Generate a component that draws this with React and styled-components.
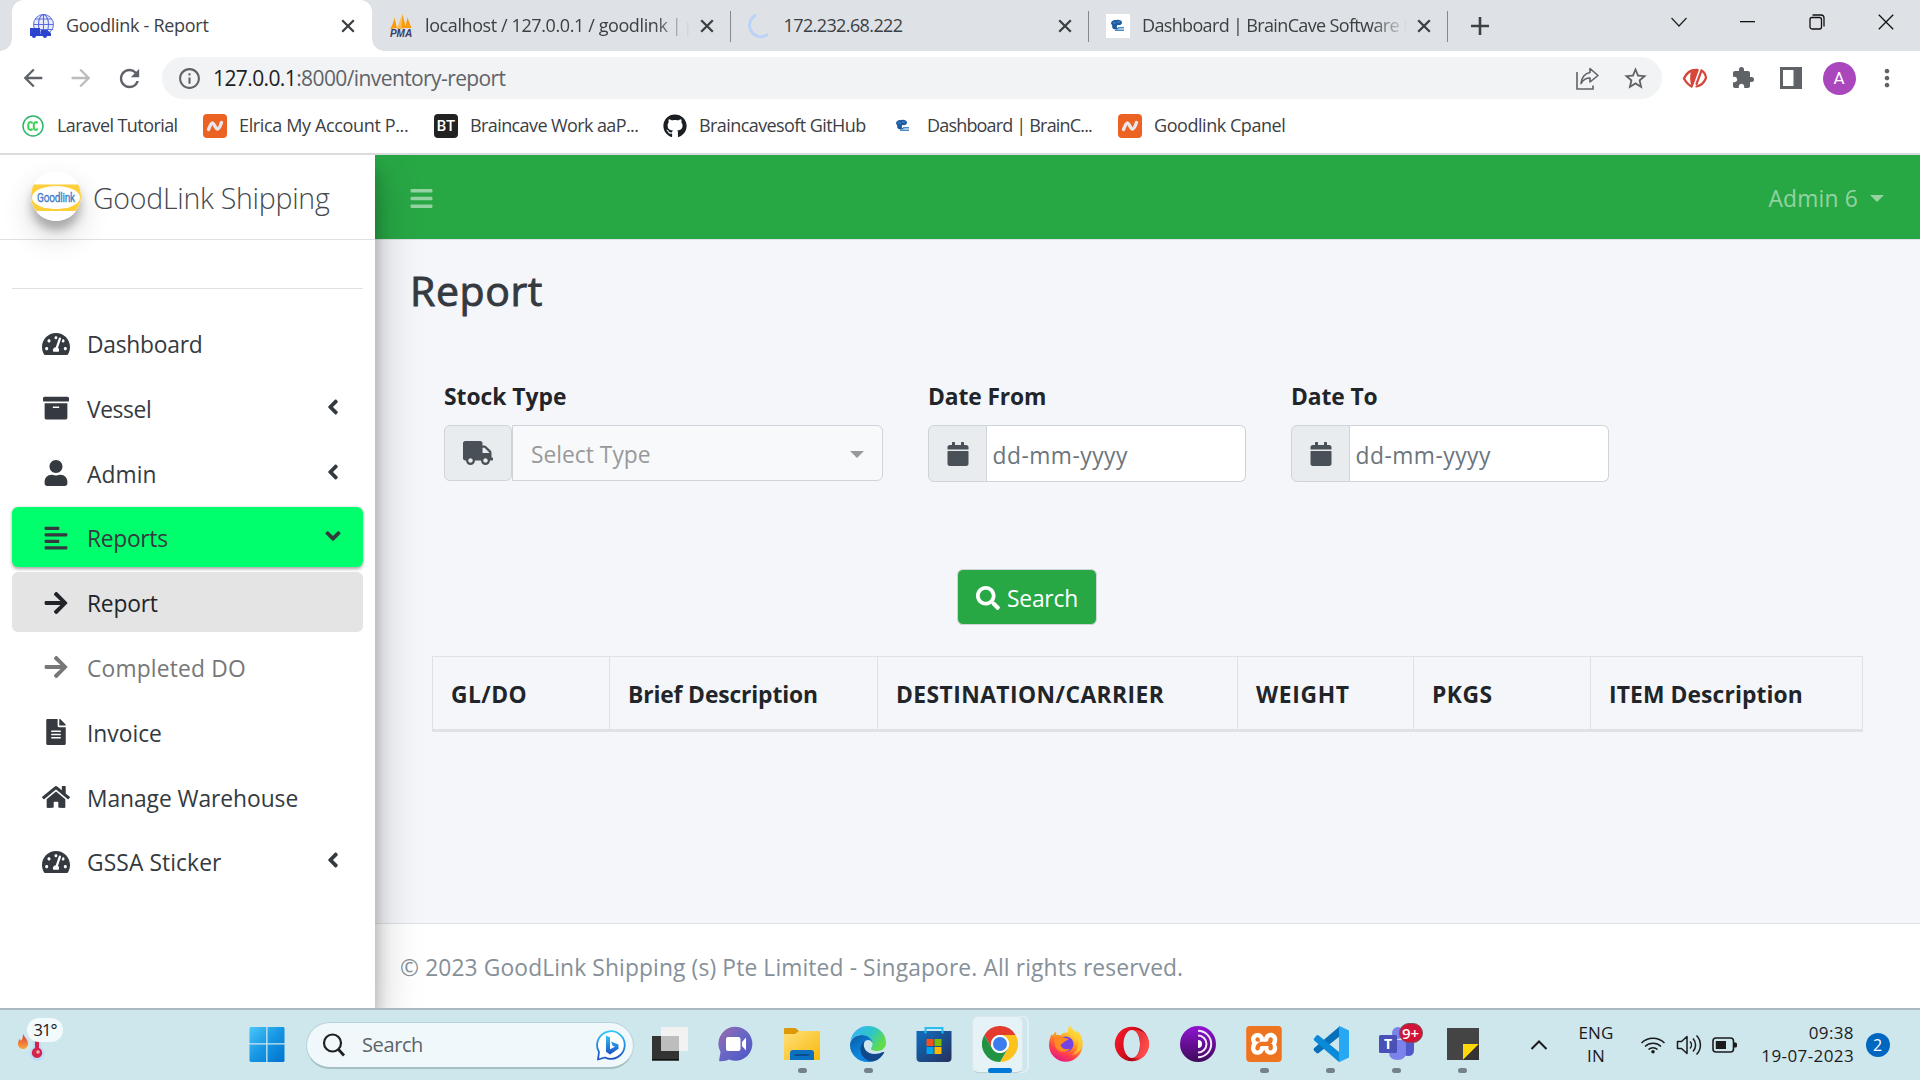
import React from "react";
import styled, { createGlobalStyle, css } from "styled-components";
import {
  FaTachometerAlt,
  FaArchive,
  FaUser,
  FaAlignLeft,
  FaArrowRight,
  FaFileAlt,
  FaHome,
  FaAngleLeft,
  FaAngleDown,
  FaTruck,
  FaCalendar,
  FaSearch,
  FaBars,
  FaGithub,
} from "react-icons/fa";
import {
  MdArrowBack,
  MdArrowForward,
  MdRefresh,
  MdInfoOutline,
  MdStarBorder,
  MdExtension,
  MdMoreVert,
} from "react-icons/md";
import { SiXampp } from "react-icons/si";

const Global = createGlobalStyle`
  *, *::before, *::after { box-sizing: border-box; }
  body { margin: 0; overflow: hidden; font-family: "Open Sans", "Noto Sans", sans-serif; color: #212529; }
  svg { display: block; flex: none; }
`;

const Screen = styled.div`
  width: 1920px;
  height: 1080px;
  display: flex;
  flex-direction: column;
  overflow: hidden;
  background: #fff;
`;

/* ---------- Browser tabs ---------- */

const TabStrip = styled.div`
  height: 51px;
  flex: none;
  display: flex;
  padding-left: 12px;
  background: #dee1e6;
`;

const Tab = styled.div`
  width: ${(p) => (p.$active ? 360 : 358.5)}px;
  flex: none;
  display: flex;
  align-items: center;
  padding: 0 ${(p) => (p.$active ? 11 : 10)}px 0 ${(p) => (p.$active ? 18 : 17)}px;
  position: relative;
  color: #3c4043;
  ${(p) =>
    p.$active
      ? css`
          background: #fff;
          border-radius: 12px 12px 0 0;
          &::before,
          &::after {
            content: "";
            position: absolute;
            bottom: 0;
            width: 12px;
            height: 12px;
          }
          &::before {
            left: -12px;
            background: radial-gradient(circle at 0 0, transparent 11.5px, #fff 12px);
          }
          &::after {
            right: -12px;
            background: radial-gradient(circle at 100% 0, transparent 11.5px, #fff 12px);
          }
        `
      : css`
          border-style: solid;
          border-width: 0 1.5px 0 0;
          border-image: linear-gradient(transparent 12px, #85898d 12px, #85898d 41px, transparent 41px) 1;
        `}
`;

const Favicon = styled.span`
  width: 24px;
  height: 24px;
  flex: none;
  margin-right: 12px;
  display: flex;
  align-items: center;
  justify-content: center;
`;

const TabTitle = styled.span`
  flex: 1;
  min-width: 0;
  margin-top: -1px;
  white-space: nowrap;
  font-size: 18px;
  line-height: 24px;
  letter-spacing: ${(p) => p.$ls || 0}px;
  ${(p) =>
    p.$fade &&
    css`
      mask-image: linear-gradient(90deg, #000 calc(100% - 36px), transparent 100%);
    `}
`;

const TabClose = styled.span`
  width: 26px;
  flex: none;
  display: flex;
  justify-content: center;
  margin-left: 4px;
`;

const NewTab = styled.span`
  width: 64px;
  display: flex;
  align-items: center;
  justify-content: center;
`;

const WindowControls = styled.div`
  margin-left: auto;
  display: flex;
  height: 43px;
`;

const WindowControl = styled.span`
  width: 69px;
  display: flex;
  align-items: center;
  justify-content: center;
`;

/* ---------- Browser toolbar ---------- */

const Toolbar = styled.div`
  height: 54px;
  flex: none;
  display: flex;
  align-items: center;
  padding: 0 9px;
`;

const ToolButton = styled.span`
  width: 48px;
  flex: none;
  display: flex;
  align-items: center;
  justify-content: center;
  color: ${(p) => p.$color || "#5f6368"};
`;

const AddressBar = styled.div`
  width: 1500px;
  height: 42px;
  margin: 0 9px;
  display: flex;
  align-items: center;
  border-radius: 21px;
  background: #f1f3f4;
  padding: 0 3px 0 15px;
`;

const Url = styled.span`
  flex: 1;
  padding-left: 11px;
  font-size: 21px;
  line-height: 28px;
  letter-spacing: -0.6px;
  color: #5f6368;
  b {
    font-weight: 400;
    color: #202124;
  }
`;

const Avatar = styled.span`
  width: 33px;
  height: 33px;
  border-radius: 50%;
  background: #ab47bc;
  color: #fff;
  display: flex;
  align-items: center;
  justify-content: center;
  font: 17px Roboto, sans-serif;
`;

const Bookmarks = styled.div`
  height: 50px;
  flex: none;
  display: flex;
  align-items: center;
  padding: 0 0 7px 21px;
  border-bottom: 2px solid #dadce0;
`;

const Bookmark = styled.span`
  width: ${(p) => p.$w}px;
  flex: none;
  display: flex;
  align-items: center;
  font-size: 18px;
  line-height: 24px;
  letter-spacing: ${(p) => p.$ls || 0}px;
  white-space: nowrap;
  color: #3c4043;
`;

const BookmarkLabel = styled.span`
  margin-top: -1px;
`;

const SquareLogo = styled.span`
  width: 24px;
  height: 24px;
  border-radius: 4px;
  background: ${(p) => p.$bg};
  color: #fff;
  display: flex;
  align-items: center;
  justify-content: center;
  font: 500 15px Roboto, sans-serif;
  letter-spacing: 0;
`;

/* ---------- Application ---------- */

const AppFrame = styled.div`
  height: 853px;
  flex: none;
  display: flex;
  overflow: hidden;
`;

const Sidebar = styled.aside`
  width: 375px;
  flex: none;
  background: #fff;
  position: relative;
  z-index: 1;
  box-shadow: 0 21px 42px rgba(0, 0, 0, 0.25), 0 15px 15px rgba(0, 0, 0, 0.22);
`;

const Brand = styled.div`
  height: 85px;
  display: flex;
  align-items: center;
  padding: 1px 0 0 31px;
  border-bottom: 1px solid #dee2e6;
  font-size: 28.5px;
  font-weight: 300;
  letter-spacing: -0.26px;
  color: #45494e;
  white-space: nowrap;
`;

const BrandLogo = styled.span`
  width: 50px;
  height: 50px;
  border-radius: 50%;
  margin: -4px 12px 0 0;
  background: #fff;
  box-shadow: 0 15px 30px rgba(0, 0, 0, 0.19), 0 9px 9px rgba(0, 0, 0, 0.23);
`;

const UserPanel = styled.div`
  height: 49px;
  margin: 0 12px 24px;
  border-bottom: 1px solid #dee2e6;
`;

const Nav = styled.nav`
  display: flex;
  flex-direction: column;
  gap: 4.8px;
  padding: 0 12px;
`;

const NavItem = styled.a`
  height: 60px;
  display: flex;
  align-items: center;
  padding: 2px 20px 0 24px;
  border-radius: 6px;
  font-size: 22.8px;
  letter-spacing: ${(p) => p.$ls || 0}px;
  color: ${(p) => ({ current: "#212529", muted: "#777" }[p.$kind] || "#343a40")};
  ${(p) =>
    p.$kind === "active" &&
    css`
      background: #00ff6c;
      box-shadow: 0 1.5px 4.5px rgba(0, 0, 0, 0.12), 0 1.5px 3px rgba(0, 0, 0, 0.24);
    `}
  ${(p) =>
    p.$kind === "current" &&
    css`
      background: #e4e4e4;
    `}
`;

const NavIcon = styled.span`
  width: 40px;
  margin: -1px 11px 0 0;
  display: flex;
  justify-content: center;
`;

const NavLabel = styled.span`
  padding-top: 1px;
`;

const NavCaret = styled.span`
  margin: 0 -2px 4px auto;
  width: 24px;
  display: flex;
  justify-content: center;
`;

const Main = styled.main`
  flex: 1;
  display: flex;
  flex-direction: column;
  background: #f4f6f9;
`;

const Navbar = styled.header`
  height: 85px;
  flex: none;
  display: flex;
  align-items: center;
  justify-content: space-between;
  padding: 2px 36px 0 34px;
  background: #28a745;
  border-bottom: 1px solid #dee2e6;
  color: rgba(255, 255, 255, 0.5);
`;

const UserMenu = styled.span`
  display: flex;
  align-items: center;
  gap: 12px;
  font-size: 22.8px;
  letter-spacing: 0.2px;
`;

const Caret = styled.span`
  border: solid transparent;
  border-width: ${(p) => p.$size}px ${(p) => p.$size}px 0;
  border-top-color: ${(p) => p.$color || "currentColor"};
`;

const Title = styled.h1`
  margin: 0;
  padding: 20px 0 0 35px;
  height: 132px;
  font-size: 41px;
  line-height: 60px;
  font-weight: 500;
  letter-spacing: 0.6px;
  color: #343a40;
  -webkit-text-stroke: 0.9px #343a40;
`;

const Filters = styled.div`
  display: flex;
  gap: 45px;
  padding-left: 69px;
  height: 197px;
`;

const Field = styled.div`
  width: ${(p) => p.$w}px;
`;

const Label = styled.label`
  display: block;
  height: 53px;
  padding-top: 9px;
  font-size: 22.8px;
  line-height: 32px;
  font-weight: 700;
  letter-spacing: ${(p) => p.$ls || 0}px;
`;

const Group = styled.div`
  display: flex;
  height: ${(p) => p.$h}px;
`;

const Prefix = styled.span`
  width: ${(p) => p.$w}px;
  display: flex;
  align-items: center;
  justify-content: center;
  background: #e9ecef;
  border: 1px solid #ced4da;
  border-radius: ${(p) => (p.$joined ? "6px 0 0 6px" : "6px")};
  color: #495057;
`;

const Select = styled.div`
  flex: 1;
  display: flex;
  align-items: center;
  justify-content: space-between;
  padding: 2px 18px 0;
  border: 1px solid #ced4da;
  border-radius: 0 6px 6px 0;
  background: #f8f9fa;
  color: #999;
  font-size: 22.8px;
`;

const DateInput = styled.div`
  flex: 1;
  display: flex;
  align-items: center;
  padding: 3px 0 0 5.5px;
  border: 1px solid #ced4da;
  border-left: 0;
  border-radius: 0 6px 6px 0;
  background: #fff;
  color: #6c757d;
  font-size: 22.8px;
  letter-spacing: 0.5px;
`;

const SearchButton = styled.button`
  width: 140px;
  height: 56px;
  margin: 0 0 31px 582px;
  padding: 2px 0 0;
  display: flex;
  align-items: center;
  justify-content: center;
  gap: 7px;
  border: 1px solid #ced4da;
  border-radius: 6px;
  background: #28a745;
  color: #fff;
  font: 22.8px "Open Sans", sans-serif;
  letter-spacing: -0.2px;
`;

const Table = styled.div`
  width: 1431px;
  height: 76px;
  margin-left: 57px;
  display: grid;
  grid-template-columns: 177px 268px 360px 176px 177px 272px;
  border: 1px solid #dee2e6;
  border-right: 0;
  border-bottom-width: 3px;
`;

const Th = styled.span`
  display: flex;
  align-items: center;
  padding: 2px 0 0 18px;
  border-right: 1px solid #dee2e6;
  font-size: 22.8px;
  font-weight: 700;
  letter-spacing: ${(p) => p.$ls || 0}px;
  white-space: nowrap;
`;

const Footer = styled.footer`
  height: 85px;
  margin-top: auto;
  display: flex;
  align-items: center;
  padding: 2px 0 0 25px;
  border-top: 1px solid #dee2e6;
  background: #fff;
  color: #869099;
  font-size: 22.8px;
  letter-spacing: 0.12px;
`;

/* ---------- Taskbar ---------- */

const Taskbar = styled.div`
  height: 72px;
  flex: none;
  display: flex;
  align-items: center;
  border-top: 2px solid #a9b9bf;
  background: #cee7ec;
  color: #1b1b1b;
`;

const Weather = styled.div`
  width: 234px;
  height: 56px;
  flex: none;
  position: relative;
  padding: 15px 0 0 16px;
`;

const Temperature = styled.span`
  position: absolute;
  left: 27px;
  top: 1px;
  width: 36px;
  height: 24px;
  border-radius: 12px;
  background: #f3fafc;
  font-size: 16.5px;
  line-height: 24px;
  text-align: center;
  letter-spacing: -0.9px;
`;

const TaskCell = styled.span`
  width: 66.05px;
  height: 70px;
  flex: none;
  display: flex;
  flex-direction: column;
  align-items: center;
  padding-top: 16px;
  position: relative;
`;

const Indicator = styled.span`
  width: ${(p) => (p.$active ? 24 : 9)}px;
  height: 5px;
  margin-top: 6px;
  border-radius: 3px;
  background: ${(p) => (p.$active ? "#0078d7" : "#758288")};
  position: relative;
`;

const ActiveTile = styled.span`
  position: absolute;
  left: 5px;
  top: 6px;
  width: 51px;
  height: 57px;
  border-radius: 6px;
  background: #e5f3f7;
  border: 1px solid #d9e8ed;
  border-bottom-color: #bccfd5;
  box-shadow: 5px 0 0 -1px #cee7ec, 6px 0 0 #e1f0f4;
`;

const Above = styled.span`
  position: relative;
`;

const Badge = styled.span`
  position: absolute;
  left: 20px;
  top: -3px;
  width: 24px;
  height: 20px;
  border-radius: 10px;
  background: #d11338;
  border: 0.5px solid #7b5058;
  color: #fff;
  font-size: 15px;
  font-weight: 600;
  line-height: 18px;
  text-align: center;
`;

const SearchBox = styled.div`
  width: 328px;
  height: 47px;
  margin: 0 3px 0 6px;
  flex: none;
  display: flex;
  align-items: center;
  gap: 16px;
  padding: 0 6px 0 15px;
  border-radius: 24px;
  border: 1px solid #b9d3da;
  border-bottom: 2px solid #a5bfc5;
  background: #f0f8fb;
  color: #5d6366;
  font-size: 20px;
  letter-spacing: -0.4px;
  svg:last-child {
    margin-left: auto;
  }
`;

const Tray = styled.div`
  margin-left: auto;
  width: 407px;
  display: flex;
  align-items: center;
  font-size: 17px;
  line-height: 23.5px;
`;

const TrayCell = styled.span`
  width: ${(p) => p.$w}px;
  flex: none;
  display: flex;
  flex-direction: column;
  align-items: ${(p) => p.$align || "center"};
  margin-top: ${(p) => (p.$text ? -2 : 0)}px;
  letter-spacing: ${(p) => p.$ls || 0}px;
  white-space: nowrap;
`;

const Count = styled.span`
  width: 24px;
  height: 24px;
  border-radius: 50%;
  background: #0067c0;
  color: #fff;
  font-size: 16px;
  line-height: 24px;
  text-align: center;
`;

/* ---------- Drawings ---------- */

const CloseIcon = () => (
  <svg width="14" height="14" viewBox="0 0 14 14">
    <path d="M1.200 1.200L12.800 12.800M12.800 1.200L1.200 12.800" stroke="#3c4043" strokeWidth="2.300" />
  </svg>
);

const PlusIcon = () => (
  <svg width="18" height="18" viewBox="0 0 18 18">
    <path d="M9 0V18M0 9H18" stroke="#3c4043" strokeWidth="2.600" />
  </svg>
);

const GlobeIcon = () => (
  <svg width="24" height="24" viewBox="0 0 24 24">
    <circle cx="13.500" cy="10.500" r="10" fill="#e9ecfb" stroke="#5a6de0" strokeWidth="1" />
    <g fill="none" stroke="#5a6de0" strokeWidth="1.100">
      <ellipse cx="13.500" cy="10.500" rx="5" ry="10" />
      <path d="M13.500 1v20M5 5h17M3.500 10.500h20M4 15.500h19" />
    </g>
    <path d="M0 14h10v7H0zM11 16h6l4 3v3H0v-2h11z" fill="#2c45cf" />
    <circle cx="4" cy="22" r="2" fill="#2c45cf" />
    <circle cx="15" cy="22" r="2" fill="#2c45cf" />
  </svg>
);

const PmaIcon = () => (
  <svg width="24" height="24" viewBox="0 0 24 24">
    <path d="M1 15C3 12 5 7 5.500 3.500L8 14zM8 15C11 10 13 5 13.500 0L17 14zM16 14L18.500 3.500L22.500 14z" fill="#f89c0e" />
    <path d="M13.500 0L12.500 14H8z" fill="#fdbf5c" />
    <text x="12" y="23" textAnchor="middle" fontFamily="Liberation Sans, sans-serif" fontSize="10" fontWeight="700" fontStyle="italic" fill="#3a3a68">
      PMA
    </text>
  </svg>
);

const SpinnerIcon = () => (
  <svg width="24" height="27" viewBox="0 0 24 27">
    <path d="M7 3.500A11 11 0 1 0 19 23" fill="none" stroke="#bcd3f8" strokeWidth="3" strokeLinecap="round" />
  </svg>
);

const BrainIcon = ({ boxed }) => (
  <svg width="24" height="24" viewBox="0 0 24 24">
    {boxed && <path d="M0 0h24v24H0z" fill="#fff" />}
    <path d="M5 9.500C5 7 8 5.500 10 6.200c2-1 6 0 6 2.300 0 2-2 3-4.500 2.500-1.500 1.500-.5 3.500 2.500 4l-4 .5C7 15.500 5.800 14 6.200 11.500z" fill="#1d5ba0" />
    <path d="M9 16.200h9M12 13.800h6" stroke="#4a8cc6" strokeWidth="1.400" />
    <path d="M7 9l3 0M11 8l3 0" stroke="#5c98cf" strokeWidth=".8" />
  </svg>
);

const LaravelIcon = () => (
  <svg width="24" height="24" viewBox="0 0 24 24">
    <circle cx="12" cy="12" r="10" fill="#fff" stroke="#30b36c" strokeWidth="1.500" />
    <path d="M11.300 9.500c-.5-2-3.800-2-4 1v3c.2 3 3.500 3 4 1M16.300 9.500c-.5-2-3.300-2-3.500 1v3c.2 3 3 3 3.500 1" fill="none" stroke="#39d353" strokeWidth="2" />
  </svg>
);

const NMark = () => (
  <svg width="20" height="14" viewBox="0 0 20 14">
    <path d="M3.500 10.500C5 7 6 4 7.500 4s3 6 5 6S15.500 6 16.500 3.500" fill="none" stroke="#e9e6ec" strokeWidth="3.400" strokeLinecap="round" />
  </svg>
);

const ShareIcon = () => (
  <svg width="26" height="26" viewBox="0 0 26 26" fill="none" stroke="#5f6368" strokeWidth="1.600">
    <path d="M3 7V24H19v-3.500" />
    <path d="M16 3.500L24 10.500L16 17v-4c-4 0-7 2-9 5.500C7.500 12.500 11 8 16 7.500z" strokeLinejoin="round" />
  </svg>
);

const BlockerIcon = () => (
  <svg width="26" height="22" viewBox="0 0 26 22">
    <path d="M2 11.500C5 4.500 10 2.500 15.500 3L9.500 19.500C6.500 18 4 15 2 11.500z" fill="none" stroke="#d5473a" strokeWidth="2.400" strokeLinejoin="round" />
    <path d="M9 5L16.500 2L10 20C8 16 7.500 9 9 5z" fill="#d5473a" />
    <path d="M19.500 3.500C22 5 23.800 8 24 11c-1.500 4-5 7.500-9.500 8.500M19.500 3.500L14.500 17" fill="none" stroke="#d5473a" strokeWidth="2.200" strokeLinecap="round" />
  </svg>
);

const PanelIcon = () => (
  <svg width="22" height="22" viewBox="0 0 22 22">
    <path d="M0 0h22v22H0z" fill="#5f6368" />
    <path d="M3 3h10.500v16H3z" fill="#fff" />
  </svg>
);

const GoodlinkLogo = () => (
  <svg width="50" height="50" viewBox="0 0 50 50">
    <defs>
      <clipPath id="disc">
        <circle cx="25" cy="25" r="25" />
      </clipPath>
    </defs>
    <g clipPath="url(#disc)">
      <path d="M0 0h50v50H0z" fill="#fff" />
      <path d="M0 13.500h50V40H0z" fill="#fccf3b" />
      <ellipse cx="25" cy="26.500" rx="24" ry="11.500" fill="#fff" />
    </g>
    <text x="25" y="31" textAnchor="middle" fontFamily="Roboto, sans-serif" fontSize="12.500" fontWeight="400" fill="#3c7cc8" stroke="#3c7cc8" strokeWidth=".3" textLength="38" lengthAdjust="spacingAndGlyphs">
      Goodlink
    </text>
  </svg>
);

const FlameThermo = () => (
  <svg width="38" height="40" viewBox="0 0 38 40">
    <defs>
      <linearGradient id="flame" x2="0" y2="1">
        <stop offset="0" stopColor="#d83b3b" />
        <stop offset="1" stopColor="#ffa53a" />
      </linearGradient>
    </defs>
    <path d="M7 2c1 3 5 5 5 9.500C12 15 9.500 17 7 17s-5-2-5-5.500C2 9.500 3 8 4 7l1 2c1.500-2 2-4 2-7z" fill="url(#flame)" />
    <path d="M17 0h8v15a7.500 7.500 0 1 1-8 0z" fill="#bcdcf7" />
    <path d="M19 0h4v16a5.200 5.200 0 1 1-4 0z" fill="#d3234b" />
    <circle cx="22" cy="20" r="1.800" fill="#f9a7b7" />
  </svg>
);

const WindowsIcon = () => (
  <svg width="36" height="36" viewBox="0 0 36 36">
    <defs>
      <linearGradient id="win" x1="0" y1="0" x2="36" y2="36" gradientUnits="userSpaceOnUse">
        <stop offset="0" stopColor="#4cc9fb" />
        <stop offset=".5" stopColor="#1796e3" />
        <stop offset="1" stopColor="#0072ce" />
      </linearGradient>
    </defs>
    <path d="M1.500 1H17.200V17.200H.5V2zM18.500 1H34.500L35.500 2V17.200H18.500zM.5 18.500H17.200V36H1.500L.5 35zM18.500 18.500H35.500V35L34.500 36H18.500z" fill="url(#win)" />
  </svg>
);

const MagnifierIcon = () => (
  <svg width="24" height="24" viewBox="0 0 24 24" fill="none" stroke="#202020">
    <circle cx="10.500" cy="10" r="8.500" strokeWidth="2.200" />
    <path d="M16.500 16.500L22 22.500" strokeWidth="2.800" />
  </svg>
);

const BingIcon = () => (
  <svg width="31" height="32" viewBox="0 0 31 32">
    <defs>
      <linearGradient id="bing" x2="0" y2="1">
        <stop offset="0" stopColor="#30c8f5" />
        <stop offset="1" stopColor="#1b4fc4" />
      </linearGradient>
    </defs>
    <path d="M2 30.500L3 23A13.800 13.800 0 1 1 9 28.500z" fill="#fff" stroke="url(#bing)" strokeWidth="1.800" strokeLinejoin="round" />
    <path d="M10 6.500l4 1.800v12l5-2.500-2.500-1.300-1.500-4 7.500 3v4.300L14 25.500l-4-2.800z" fill="url(#bing)" />
  </svg>
);

const TaskViewIcon = () => (
  <svg width="36" height="36" viewBox="0 0 36 36">
    <path d="M0 10h27v24.500H0z" fill="#333" />
    <path d="M0 33h27v1.500H0z" fill="#111" />
    <path d="M9 1h27v24H9z" fill="#f2f2f2" />
    <path d="M9 10h18v15H9z" fill="#bdbdbd" />
  </svg>
);

const ChatIcon = () => (
  <svg width="36" height="36" viewBox="0 0 36 36">
    <defs>
      <linearGradient id="chat" x1="0" x2="1" y2="1">
        <stop offset="0" stopColor="#a069ac" />
        <stop offset=".45" stopColor="#6a68c4" />
        <stop offset="1" stopColor="#4f55c8" />
      </linearGradient>
    </defs>
    <path d="M1 35l1.500-9A17 17 0 1 1 11 33.500C8 35 4 35.500 1 35z" fill="url(#chat)" />
    <rect x="8" y="11" width="14.500" height="14" rx="2" fill="#fff" />
    <path d="M24 16l4-4.500v13L24 20z" fill="#fff" />
  </svg>
);

const FolderIcon = () => (
  <svg width="36" height="36" viewBox="0 0 36 36">
    <defs>
      <linearGradient id="folder" x2="1" y2="1">
        <stop offset="0" stopColor="#ffe07a" />
        <stop offset="1" stopColor="#f8b90a" />
      </linearGradient>
    </defs>
    <path d="M0 3q0-1 1-1h10.500L15 5v5H0z" fill="#dc9a08" />
    <path d="M0 8h11l4-3H35q1 0 1 1v28H0z" fill="url(#folder)" />
    <path d="M6 34v-7q0-3 3-3h18q3 0 3 3v7z" fill="#0c70c0" />
    <path d="M10.500 29h14.500" stroke="#0a4a86" strokeWidth="1.800" />
  </svg>
);

const EdgeIcon = () => (
  <svg width="36" height="36" viewBox="0 0 36 36">
    <defs>
      <linearGradient id="edgeTop" x2="1" y2=".5">
        <stop offset=".15" stopColor="#34b4f2" />
        <stop offset=".6" stopColor="#2fc7c4" />
        <stop offset="1" stopColor="#62dc48" />
      </linearGradient>
      <linearGradient id="edgeLeft" x2=".6" y2="1">
        <stop offset="0" stopColor="#0c59a4" />
        <stop offset=".7" stopColor="#0a86de" />
      </linearGradient>
    </defs>
    <path d="M.3 15.500C2 6 9 0 18 0c10 0 18 7 18 16.500C36 22 32 25 27.500 25c-4 0-6.500-1-6.500-2.500 0-1 1.500-1.500 1.500-4.500C22.500 13 17 9 12 9 6 9 2 12 .3 15.500z" fill="url(#edgeTop)" />
    <path d="M0 19C0 13 6 9 12 9c5 0 10 3.500 10.500 8-1-2-2.500-3-4.500-3-3.500 0-6 4-6 8 0 7 6 12 13 12-2 1.500-4.500 2-7 2C8 36 0 28.500 0 19z" fill="url(#edgeLeft)" />
    <path d="M15.500 15C13 17 13.500 21 15.500 24c3.500 4.500 11 5 17.500 2 1-.4 1.500.3 1 1-3 5-7 8-12 8.500-7-1-12-6.500-11.500-13 .3-3.500 2-6.500 5-7.500z" fill="#11488c" />
  </svg>
);

const StoreIcon = () => (
  <svg width="36" height="36" viewBox="0 0 36 36">
    <defs>
      <linearGradient id="store" x2="1" y2="1">
        <stop offset="0" stopColor="#0f6fc2" />
        <stop offset="1" stopColor="#26305c" />
      </linearGradient>
    </defs>
    <path d="M.5 5h35v27q0 4-4 4h-27q-4 0-4-4z" fill="url(#store)" />
    <path d="M9.500 7.500V2h17v5.500" fill="none" stroke="#27bdf0" strokeWidth="2" />
    <path d="M10.500 13h7v7h-7z" fill="#f25022" />
    <path d="M18.500 13h7v7h-7z" fill="#7fba00" />
    <path d="M10.500 21h7v7h-7z" fill="#00a4ef" />
    <path d="M18.500 21h7v7h-7z" fill="#ffb900" />
  </svg>
);

const ChromeIcon = () => (
  <svg width="36" height="36" viewBox="0 0 36 36">
    <path d="M18 9H33.600A18 18 0 0 0 2.400 9L10.200 22.500A9 9 0 0 1 18 9z" fill="#e33b2e" />
    <path d="M33.600 9H18A9 9 0 0 1 25.800 22.500L18 36A18 18 0 0 0 33.600 9z" fill="#fcc31e" />
    <path d="M2.400 9A18 18 0 0 0 18 36L25.800 22.500A9 9 0 0 1 10.200 22.500z" fill="#229342" />
    <circle cx="18" cy="18" r="9" fill="#fff" />
    <circle cx="18" cy="18" r="7" fill="#3b7ded" />
  </svg>
);

const FirefoxIcon = () => (
  <svg width="36" height="36" viewBox="0 0 36 36">
    <defs>
      <linearGradient id="ffx" x1=".8" y1="0" x2=".3" y2="1">
        <stop offset=".1" stopColor="#fff04a" />
        <stop offset=".45" stopColor="#ff9a1f" />
        <stop offset=".75" stopColor="#ff3f4a" />
        <stop offset="1" stopColor="#e3158a" />
      </linearGradient>
    </defs>
    <path d="M22 0c2 3 4 4.500 6.500 7L29 4.500C33 9 35 14 34.500 19A16.700 16.700 0 0 1 1 19C1 14 2.500 10 4 8l.5 2C5.500 7.500 7 6 8.500 5.500L8 9c2-.5 3 0 4.500.5C15 6 19 7 20 6c-.5-2 .5-4.500 2-6z" fill="url(#ffx)" />
    <circle cx="18" cy="18" r="7.500" fill="#7542e5" />
    <path d="M8 9.500c4-.5 6 .5 8 2.500 2 0 4 0 4.500 1-1 1.500-3 2-4.500 3-1 2-3 1.500-3.500 3 1 4 6 5 9.500 3.500-4 5.500-13 4-15-2.500-.8-4-.5-7 1-10.500z" fill="#ff8b22" />
    <path d="M20 6c4 2 8 7 7 13 2-2 2-5 1.500-7 3 6 1 14-5 17 7-1 11-6 11-12 0-5-2-9-5.500-12.500L28.500 7C26 4.500 24 3 22 0c-1.500 1.500-2.500 4-2 6z" fill="#ffcf35" opacity=".75" />
  </svg>
);

const OperaIcon = () => (
  <svg width="36" height="36" viewBox="0 0 36 36">
    <defs>
      <linearGradient id="opera" x2="1" y2=".4">
        <stop offset="0" stopColor="#ff1b2d" />
        <stop offset=".5" stopColor="#d4101f" />
        <stop offset=".75" stopColor="#a70014" />
        <stop offset="1" stopColor="#ff4b4b" />
      </linearGradient>
    </defs>
    <path fillRule="evenodd" d="M18 .8a17.200 17.200 0 1 0 0 34.400A17.200 17.200 0 0 0 18 .8zM18 4c4.500 0 8 6 8 14s-3.500 14-8 14-8.500-6-8.500-14S13.500 4 18 4z" fill="url(#opera)" />
    <path d="M18 4c4 0 8 0 12 2.500 7 7 6 17 0 23.500-4 2.500-8 2-12 2 4.500 0 8-6 8-14S22.500 4 18 4z" fill="#ff4b4b" opacity=".75" />
  </svg>
);

const TorIcon = () => (
  <svg width="36" height="36" viewBox="0 0 36 36">
    <defs>
      <linearGradient id="tor" x2="0" y2="1">
        <stop offset="0" stopColor="#9013d4" />
        <stop offset="1" stopColor="#3e0b58" />
      </linearGradient>
    </defs>
    <circle cx="18" cy="18" r="18" fill="url(#tor)" />
    <path d="M18 14a4 4 0 0 1 0 8z" fill="#fff" />
    <path d="M18 9.500a8.500 8.500 0 0 1 0 17M18 4.800a13.200 13.200 0 0 1 0 26.400" fill="none" stroke="#f4e8fa" strokeWidth="2" />
  </svg>
);

const XamppTile = styled.span`
  display: block;
  width: 36px;
  height: 36px;
  border-radius: 5px;
  background: #fff;
  color: #ee7422;
`;

const CodeIcon = () => (
  <svg width="36" height="36" viewBox="0 0 36 36">
    <path d="M1 24.500l2.500 2.500q1 .8 2.200 0L27 10V0L1.200 22Q0 23.200 1 24.500z" fill="#0670ba" />
    <path d="M1.200 14.500L26 36V26L5.700 9.500q-1.200-.8-2.200 0L1 12.500q-.8 1 .2 2z" fill="#0a8ad8" />
    <path d="M26.500 0L36 4.500v27L26.500 36q-.8 0-.5-1V1q0-1 .5-1z" fill="#28a8f2" />
  </svg>
);

const TeamsIcon = () => (
  <svg width="36" height="36" viewBox="0 0 36 36">
    <circle cx="29" cy="9" r="4.500" fill="#5059c9" />
    <path d="M24 14h11v10q0 6-6 6-5 0-5-6z" fill="#5059c9" />
    <circle cx="19" cy="7" r="6" fill="#7b83eb" />
    <path d="M10 14h17v12q0 8-8.500 8Q10 34 10 26z" fill="#7b83eb" />
    <rect x="0" y="9" width="18" height="18" rx="1.500" fill="#4951b8" />
    <text x="9" y="23" textAnchor="middle" fontFamily="Open Sans, sans-serif" fontSize="14" fontWeight="700" fill="#fff">
      T
    </text>
  </svg>
);

const StickyIcon = () => (
  <svg width="36" height="36" viewBox="0 0 36 36">
    <path d="M2 2h32v32H2z" fill="#444" />
    <path d="M18 18h16L18 34z" fill="#ffd60a" />
    <path d="M34 18v16H18z" fill="#333" />
  </svg>
);

const ChevronUpIcon = () => (
  <svg width="18" height="12" viewBox="0 0 18 12">
    <path d="M1.500 10L9 2.500L16.500 10" fill="none" stroke="#1b1b1b" strokeWidth="2" />
  </svg>
);

const WifiIcon = () => (
  <svg width="26" height="20" viewBox="0 0 26 20" fill="none" stroke="#1b1b1b" strokeWidth="1.500">
    <path d="M1.500 8a16.300 16.300 0 0 1 23 0M5 11.500a11.500 11.500 0 0 1 16 0M8.500 14.500a6.500 6.500 0 0 1 9 0" />
    <circle cx="13" cy="16.800" r="1.800" fill="#1b1b1b" stroke="none" />
  </svg>
);

const VolumeIcon = () => (
  <svg width="26" height="22" viewBox="0 0 26 22" fill="none" stroke="#1b1b1b" strokeWidth="1.500">
    <path d="M1.500 7.500H5.500L11 2.500V19.500L5.500 14.500H1.500z" strokeLinejoin="round" />
    <path d="M14 7.500a5 5 0 0 1 0 7M17 4.500a9.500 9.500 0 0 1 0 13M20.500 1.500a13.500 13.500 0 0 1 0 19" />
  </svg>
);

const BatteryIcon = () => (
  <svg width="26" height="18" viewBox="0 0 26 18">
    <rect x="1" y="2" width="20.500" height="14" rx="3" fill="none" stroke="#1b1b1b" strokeWidth="1.600" />
    <path d="M3.800 5H14v8H3.800zM22 6.500h1.500q1.500 0 1.500 1.500v2q0 1.500-1.500 1.500H22z" fill="#1b1b1b" />
  </svg>
);

/* ---------- Data ---------- */

const NAV = [
  { label: "Dashboard", ls: -0.25, icon: <FaTachometerAlt size={28} /> },
  { label: "Vessel", ls: -0.4, icon: <FaArchive size={26} />, caret: "left" },
  { label: "Admin", ls: 0.1, icon: <FaUser size={26} />, caret: "left" },
  { label: "Reports", ls: -0.3, icon: <FaAlignLeft size={26} />, caret: "down", kind: "active" },
  { label: "Report", ls: -0.2, icon: <FaArrowRight size={26} />, kind: "current" },
  { label: "Completed DO", ls: 0.17, icon: <FaArrowRight size={26} />, kind: "muted" },
  { label: "Invoice", ls: 0, icon: <FaFileAlt size={26} /> },
  { label: "Manage Warehouse", ls: -0.06, icon: <FaHome size={28} /> },
  { label: "GSSA Sticker", ls: 0.1, icon: <FaTachometerAlt size={28} />, caret: "left" },
];

const HEADERS = [
  { label: "GL/DO", ls: 0.45 },
  { label: "Brief Description", ls: -0.12 },
  { label: "DESTINATION/CARRIER", ls: 0.45 },
  { label: "WEIGHT", ls: 0.7 },
  { label: "PKGS", ls: 0.5 },
  { label: "ITEM Description", ls: 0.12 },
];

const BOOKMARKS = [
  { label: "Laravel Tutorial", w: 182, ls: -0.57, icon: <LaravelIcon /> },
  { label: "Elrica My Account P...", w: 231, ls: -0.36, icon: <SquareLogo $bg="#ec6223"><NMark /></SquareLogo> },
  { label: "Braincave Work aaP...", w: 229, ls: -0.6, icon: <SquareLogo $bg="#222">BT</SquareLogo> },
  { label: "Braincavesoft GitHub", w: 228, ls: -0.58, icon: <FaGithub size={24} color="#1b1f23" /> },
  { label: "Dashboard | BrainC...", w: 227, ls: -0.82, icon: <BrainIcon /> },
  { label: "Goodlink Cpanel", w: 200, ls: -0.45, icon: <SquareLogo $bg="#ec6223"><NMark /></SquareLogo> },
];

const APPS = [
  { icon: <TaskViewIcon /> },
  { icon: <ChatIcon /> },
  { icon: <FolderIcon />, open: true },
  { icon: <EdgeIcon />, open: true },
  { icon: <StoreIcon /> },
  { icon: <ChromeIcon />, open: true, active: true },
  { icon: <FirefoxIcon /> },
  { icon: <OperaIcon /> },
  { icon: <TorIcon /> },
  { icon: <XamppTile><SiXampp size={36} /></XamppTile>, open: true },
  { icon: <CodeIcon />, open: true },
  { icon: <TeamsIcon />, open: true, badge: "9+" },
  { icon: <StickyIcon />, open: true },
];

export default function App() {
  return (
    <Screen>
      <Global />
      <TabStrip>
        <Tab $active>
          <Favicon><GlobeIcon /></Favicon>
          <TabTitle $ls={-0.28}>Goodlink - Report</TabTitle>
          <TabClose><CloseIcon /></TabClose>
        </Tab>
        <Tab>
          <Favicon><PmaIcon /></Favicon>
          <TabTitle $fade $ls={-0.4}>localhost / 127.0.0.1 / goodlink | p</TabTitle>
          <TabClose><CloseIcon /></TabClose>
        </Tab>
        <Tab>
          <Favicon><SpinnerIcon /></Favicon>
          <TabTitle $ls={-0.6}>172.232.68.222</TabTitle>
          <TabClose><CloseIcon /></TabClose>
        </Tab>
        <Tab>
          <Favicon><BrainIcon boxed /></Favicon>
          <TabTitle $fade $ls={-0.65}>Dashboard | BrainCave Software P</TabTitle>
          <TabClose><CloseIcon /></TabClose>
        </Tab>
        <NewTab><PlusIcon /></NewTab>
        <WindowControls>
          <WindowControl>
            <svg width="16" height="10" viewBox="0 0 16 10"><path d="M.5 1L8 9L15.500 1" fill="none" stroke="#222" strokeWidth="1.200" /></svg>
          </WindowControl>
          <WindowControl>
            <svg width="15" height="2"><path d="M0 0h15v1.300H0z" fill="#111" /></svg>
          </WindowControl>
          <WindowControl>
            <svg width="16" height="16" viewBox="0 0 16 16" fill="none" stroke="#111" strokeWidth="1.300">
              <rect x="1" y="3.500" width="11.500" height="11.500" rx="2" />
              <path d="M3.500 1H12q3 0 3 3v8.500" />
            </svg>
          </WindowControl>
          <WindowControl>
            <svg width="16" height="16" viewBox="0 0 16 16"><path d="M.8 .8L15.200 15.200M15.200 .8L.8 15.200" stroke="#111" strokeWidth="1.300" /></svg>
          </WindowControl>
        </WindowControls>
      </TabStrip>
      <Toolbar>
        <ToolButton><MdArrowBack size={28} /></ToolButton>
        <ToolButton $color="#babcbe"><MdArrowForward size={28} /></ToolButton>
        <ToolButton><MdRefresh size={29} /></ToolButton>
        <AddressBar>
          <MdInfoOutline size={25} color="#5f6368" />
          <Url><b>127.0.0.1</b>:8000/inventory-report</Url>
          <ToolButton><ShareIcon /></ToolButton>
          <ToolButton><MdStarBorder size={27} /></ToolButton>
        </AddressBar>
        <ToolButton><BlockerIcon /></ToolButton>
        <ToolButton><MdExtension size={24} /></ToolButton>
        <ToolButton><PanelIcon /></ToolButton>
        <ToolButton><Avatar>A</Avatar></ToolButton>
        <ToolButton><MdMoreVert size={28} /></ToolButton>
      </Toolbar>
      <Bookmarks>
        {BOOKMARKS.map((b) => (
          <Bookmark key={b.label} $w={b.w} $ls={b.ls}>
            <Favicon>{b.icon}</Favicon>
            <BookmarkLabel>{b.label}</BookmarkLabel>
          </Bookmark>
        ))}
      </Bookmarks>

      <AppFrame>
        <Sidebar>
          <Brand>
            <BrandLogo><GoodlinkLogo /></BrandLogo>
            GoodLink Shipping
          </Brand>
          <UserPanel />
          <Nav>
            {NAV.map((n) => (
              <NavItem key={n.label} $kind={n.kind} $ls={n.ls}>
                <NavIcon>{n.icon}</NavIcon>
                <NavLabel>{n.label}</NavLabel>
                {n.caret && <NavCaret>{n.caret === "left" ? <FaAngleLeft size={24} /> : <FaAngleDown size={24} />}</NavCaret>}
              </NavItem>
            ))}
          </Nav>
        </Sidebar>
        <Main>
          <Navbar>
            <FaBars size={25} />
            <UserMenu>
              Admin 6
              <Caret $size={7} />
            </UserMenu>
          </Navbar>
          <Title>Report</Title>
          <Filters>
            <Field $w={439}>
              <Label>Stock Type</Label>
              <Group $h={56}>
                <Prefix $w={68}><FaTruck size={30} /></Prefix>
                <Select>
                  Select Type
                  <Caret $size={7} />
                </Select>
              </Group>
            </Field>
            <Field $w={318}>
              <Label $ls={-0.1}>Date From</Label>
              <Group $h={57}>
                <Prefix $w={59} $joined><FaCalendar size={24} /></Prefix>
                <DateInput>dd-mm-yyyy</DateInput>
              </Group>
            </Field>
            <Field $w={318}>
              <Label $ls={-0.1}>Date To</Label>
              <Group $h={57}>
                <Prefix $w={59} $joined><FaCalendar size={24} /></Prefix>
                <DateInput>dd-mm-yyyy</DateInput>
              </Group>
            </Field>
          </Filters>
          <SearchButton>
            <FaSearch size={24} />
            Search
          </SearchButton>
          <Table>
            {HEADERS.map((h) => (
              <Th key={h.label} $ls={h.ls}>{h.label}</Th>
            ))}
          </Table>
          <Footer>© 2023 GoodLink Shipping (s) Pte Limited - Singapore. All rights reserved.</Footer>
        </Main>
      </AppFrame>

      <Taskbar>
        <Weather>
          <FlameThermo />
          <Temperature>31°</Temperature>
        </Weather>
        <TaskCell><WindowsIcon /></TaskCell>
        <SearchBox>
          <MagnifierIcon />
          Search
          <BingIcon />
        </SearchBox>
        {APPS.map((a, i) => (
          <TaskCell key={i}>
            {a.active && <ActiveTile />}
            <Above>
              {a.icon}
              {a.badge && <Badge>{a.badge}</Badge>}
            </Above>
            {a.open && <Indicator $active={a.active} />}
          </TaskCell>
        ))}
        <Tray>
          <TrayCell $w={52}><ChevronUpIcon /></TrayCell>
          <TrayCell $w={62} $ls={0.2} $text>
            <span>ENG</span>
            <span>IN</span>
          </TrayCell>
          <TrayCell $w={52}><WifiIcon /></TrayCell>
          <TrayCell $w={20}><VolumeIcon /></TrayCell>
          <TrayCell $w={52}><BatteryIcon /></TrayCell>
          <TrayCell $w={103} $align="flex-end" $ls={0.4} $text>
            <span>09:38</span>
            <span>19-07-2023</span>
          </TrayCell>
          <TrayCell $w={47}><Count>2</Count></TrayCell>
        </Tray>
      </Taskbar>
    </Screen>
  );
}
